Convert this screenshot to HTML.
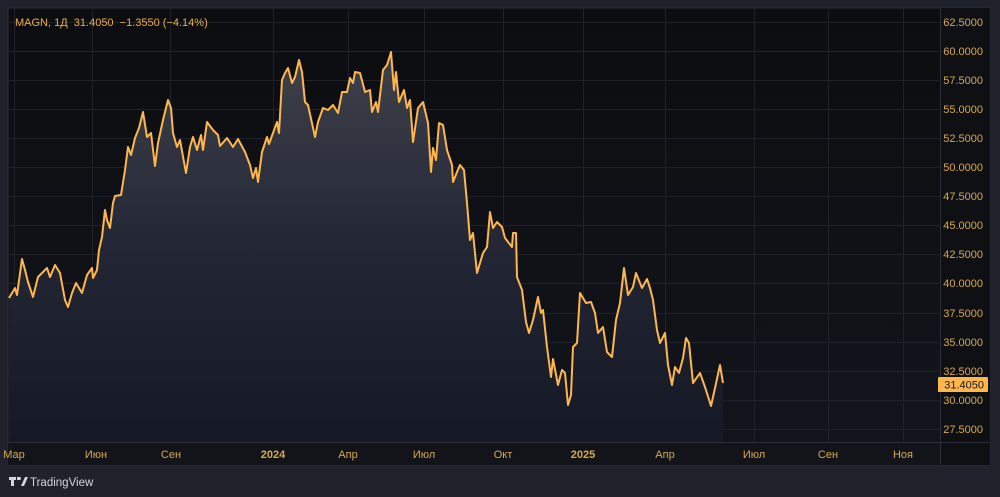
<!DOCTYPE html>
<html><head><meta charset="utf-8"><style>
html,body{margin:0;padding:0;background:#1f222b;width:1000px;height:497px;overflow:hidden;font-family:"Liberation Sans","Noto Sans CJK SC",sans-serif}
svg{position:absolute;left:0;top:0}
</style></head><body>
<svg width="1000" height="497" viewBox="0 0 1000 497">
<defs>
<linearGradient id="bg" x1="0" y1="0" x2="0" y2="1"><stop offset="0" stop-color="#0c0d10"/><stop offset="1" stop-color="#12151c"/></linearGradient>
<linearGradient id="fl" gradientUnits="userSpaceOnUse" x1="0" y1="50" x2="0" y2="442"><stop offset="0" stop-color="#3f424b"/><stop offset="0.5" stop-color="#232735"/><stop offset="1" stop-color="#151925"/></linearGradient>
</defs>
<rect x="8" y="8" width="982" height="457" fill="url(#bg)" stroke="#2a2e39" stroke-width="1"/>
<rect x="8" y="442" width="932" height="23" fill="#121419"/>
<rect x="940" y="8" width="50" height="457" fill="#0f1014"/>
<g stroke="#1f2229" stroke-width="1">
<line x1="8" x2="940" y1="22.5" y2="22.5"/><line x1="8" x2="940" y1="51.5" y2="51.5"/><line x1="8" x2="940" y1="80.5" y2="80.5"/><line x1="8" x2="940" y1="109.5" y2="109.5"/><line x1="8" x2="940" y1="138.5" y2="138.5"/><line x1="8" x2="940" y1="167.5" y2="167.5"/><line x1="8" x2="940" y1="196.5" y2="196.5"/><line x1="8" x2="940" y1="225.5" y2="225.5"/><line x1="8" x2="940" y1="254.5" y2="254.5"/><line x1="8" x2="940" y1="283.5" y2="283.5"/><line x1="8" x2="940" y1="313.5" y2="313.5"/><line x1="8" x2="940" y1="342.5" y2="342.5"/><line x1="8" x2="940" y1="371.5" y2="371.5"/><line x1="8" x2="940" y1="400.5" y2="400.5"/><line x1="8" x2="940" y1="429.5" y2="429.5"/>
<line y1="8" y2="442" x1="14.5" x2="14.5"/><line y1="8" y2="442" x1="92.5" x2="92.5"/><line y1="8" y2="442" x1="170.5" x2="170.5"/><line y1="8" y2="442" x1="273.5" x2="273.5"/><line y1="8" y2="442" x1="348.5" x2="348.5"/><line y1="8" y2="442" x1="424.5" x2="424.5"/><line y1="8" y2="442" x1="503.5" x2="503.5"/><line y1="8" y2="442" x1="583.5" x2="583.5"/><line y1="8" y2="442" x1="665.5" x2="665.5"/><line y1="8" y2="442" x1="754.5" x2="754.5"/><line y1="8" y2="442" x1="828.5" x2="828.5"/><line y1="8" y2="442" x1="903.5" x2="903.5"/>
</g>
<line x1="8" x2="990" y1="442.5" y2="442.5" stroke="#2a2e39"/>
<line x1="940.5" x2="940.5" y1="8" y2="465" stroke="#2a2e39"/>
<path id="p" d="M9,298 L15,288 L17,295 L22,259 L25,270 L28,282 L33,297 L38,277 L47,268 L50,277 L55,265 L60,273 L65,300 L68,307 L72,293 L76,283 L82,293 L87,275 L92,268 L93,278 L97,270 L99,250 L102,237 L105,210 L107,220 L110,228 L113,203 L115,196 L121,195 L125,170 L128,147 L131,155 L135,138 L139,128 L143,112 L147,137 L151,133 L155,166 L158,143 L163,120 L168,100 L171,108 L173,133 L177,147 L180,140 L186,173 L190,147 L193,137 L197,150 L201,135 L203,150 L207,122 L213,130 L218,135 L220,146 L227,138 L233,147 L238,139 L245,152 L250,165 L253,178 L256,168 L258,182 L262,152 L267,137 L269,144 L273,133 L277,122 L279,133 L282,80 L285,73 L288,68 L292,83 L295,77 L299,60 L302,72 L305,102 L308,105 L315,137 L318,122 L323,108 L328,110 L333,105 L338,113 L342,92 L347,92 L350,78 L353,83 L355,72 L360,73 L365,92 L370,90 L372,112 L376,102 L378,112 L383,70 L387,65 L391,52 L394,90 L396,72 L399,102 L404,90 L407,108 L410,100 L413,142 L418,108 L423,102 L428,123 L431,172 L433,148 L436,160 L439,123 L443,125 L447,150 L452,165 L453,182 L457,172 L460,165 L464,170 L467,203 L470,240 L473,233 L477,273 L483,253 L487,247 L490,212 L493,228 L497,222 L502,227 L505,238 L512,247 L513,233 L516,233 L517,277 L522,290 L526,322 L529,333 L533,320 L538,297 L541,313 L543,310 L547,347 L551,377 L553,359 L558,385 L562,370 L565,373 L568,405 L571,395 L573,347 L577,343 L580,293 L586,303 L591,302 L595,313 L598,333 L603,327 L607,352 L612,357 L616,320 L620,303 L624,268 L628,295 L633,287 L636,273 L642,288 L647,279 L650,288 L653,300 L657,330 L660,343 L665,333 L668,365 L672,385 L675,367 L679,373 L683,358 L686,338 L689,343 L693,383 L700,373 L705,387 L711,406 L715,388 L720,365 L723,383" fill="none"/>
<path d="M9,298 L15,288 L17,295 L22,259 L25,270 L28,282 L33,297 L38,277 L47,268 L50,277 L55,265 L60,273 L65,300 L68,307 L72,293 L76,283 L82,293 L87,275 L92,268 L93,278 L97,270 L99,250 L102,237 L105,210 L107,220 L110,228 L113,203 L115,196 L121,195 L125,170 L128,147 L131,155 L135,138 L139,128 L143,112 L147,137 L151,133 L155,166 L158,143 L163,120 L168,100 L171,108 L173,133 L177,147 L180,140 L186,173 L190,147 L193,137 L197,150 L201,135 L203,150 L207,122 L213,130 L218,135 L220,146 L227,138 L233,147 L238,139 L245,152 L250,165 L253,178 L256,168 L258,182 L262,152 L267,137 L269,144 L273,133 L277,122 L279,133 L282,80 L285,73 L288,68 L292,83 L295,77 L299,60 L302,72 L305,102 L308,105 L315,137 L318,122 L323,108 L328,110 L333,105 L338,113 L342,92 L347,92 L350,78 L353,83 L355,72 L360,73 L365,92 L370,90 L372,112 L376,102 L378,112 L383,70 L387,65 L391,52 L394,90 L396,72 L399,102 L404,90 L407,108 L410,100 L413,142 L418,108 L423,102 L428,123 L431,172 L433,148 L436,160 L439,123 L443,125 L447,150 L452,165 L453,182 L457,172 L460,165 L464,170 L467,203 L470,240 L473,233 L477,273 L483,253 L487,247 L490,212 L493,228 L497,222 L502,227 L505,238 L512,247 L513,233 L516,233 L517,277 L522,290 L526,322 L529,333 L533,320 L538,297 L541,313 L543,310 L547,347 L551,377 L553,359 L558,385 L562,370 L565,373 L568,405 L571,395 L573,347 L577,343 L580,293 L586,303 L591,302 L595,313 L598,333 L603,327 L607,352 L612,357 L616,320 L620,303 L624,268 L628,295 L633,287 L636,273 L642,288 L647,279 L650,288 L653,300 L657,330 L660,343 L665,333 L668,365 L672,385 L675,367 L679,373 L683,358 L686,338 L689,343 L693,383 L700,373 L705,387 L711,406 L715,388 L720,365 L723,383 L723,442 L9,442 Z" fill="url(#fl)"/>
<use href="#p" stroke="#ffb74d" stroke-width="2" stroke-linejoin="round"/>
<g fill="#d9a94a" font-size="11" text-anchor="end" font-family="Liberation Sans,sans-serif">
<text x="983" y="26">62.5000</text><text x="983" y="55">60.0000</text><text x="983" y="84">57.5000</text><text x="983" y="113">55.0000</text><text x="983" y="142">52.5000</text><text x="983" y="171">50.0000</text><text x="983" y="200">47.5000</text><text x="983" y="229">45.0000</text><text x="983" y="258">42.5000</text><text x="983" y="287">40.0000</text><text x="983" y="317">37.5000</text><text x="983" y="346">35.0000</text><text x="983" y="375">32.5000</text><text x="983" y="404">30.0000</text><text x="983" y="433">27.5000</text>
</g>
<rect x="938" y="377" width="50" height="15" rx="1" fill="#ffb74d"/>
<text x="984" y="388.5" font-size="11" text-anchor="end" fill="#131722">31.4050</text>
<g fill="#d9a94a" font-size="11" text-anchor="middle">
<text x="14" y="458">Мар</text><text x="96" y="458">Июн</text><text x="171" y="458">Сен</text><text x="273" y="458" font-weight="bold">2024</text><text x="348" y="458">Апр</text><text x="424" y="458">Июл</text><text x="503" y="458">Окт</text><text x="583" y="458" font-weight="bold">2025</text><text x="665" y="458">Апр</text><text x="754" y="458">Июл</text><text x="828" y="458">Сен</text><text x="903" y="458">Ноя</text>
</g>
<text x="15" y="26" font-size="11" fill="#f0ad40">MAGN, 1Д&#160; 31.4050&#160; −1.3550 (−4.14%)</text>
<g fill="#d5d7de">
<path d="M9,477 h7 v3 h-2 v6 h-3 v-6 h-2z"/>
<path d="M17,477 h2.5 a1.5,1.5 0 0 1 0,3 h-2.5z"/>
<path d="M21,486 l4,-9 h3 l-4,9z"/>
</g>
<text x="30" y="486" font-size="11.5" fill="#d5d7de">TradingView</text>
</svg>
</body></html>
